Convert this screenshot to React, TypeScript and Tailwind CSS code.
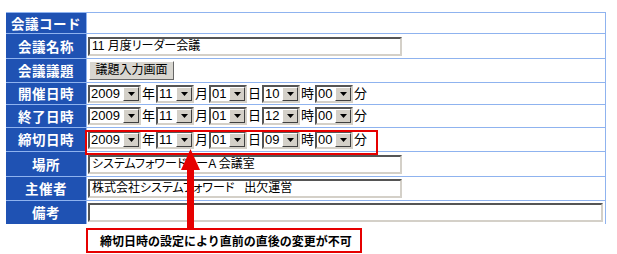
import React from "react";

const inset =
  "border-2 border-t-[#555] border-l-[#555] border-r-[#d4d0c8] border-b-[#d4d0c8] bg-white";

function Select({ value, wide }: { value: string; wide?: boolean }) {
  return (
    <div className={`${wide ? "w-[53px]" : "w-[38px]"} h-[18px] flex ${inset}`}>
      <span className="flex-1 pl-[1px] text-[13px] leading-[14px]">{value}</span>
      <span className="w-[16px] h-[14px] bg-[#d4d0c8] border border-t-white border-l-white border-r-[#404040] border-b-[#404040] flex items-center justify-center">
        <svg width="7" height="4" viewBox="0 0 7 4">
          <path d="M0 0h7L3.5 4z" fill="#000" />
        </svg>
      </span>
    </div>
  );
}

function Unit({ ch }: { ch: string }) {
  return <span className="w-[15px] text-center text-[13px] leading-[18px]">{ch}</span>;
}

function DateTime({ y, m, d, h, mi }: { y: string; m: string; d: string; h: string; mi: string }) {
  return (
    <div className="flex items-center pl-[1px]">
      <Select value={y} wide />
      <Unit ch="年" />
      <Select value={m} />
      <Unit ch="月" />
      <Select value={d} />
      <Unit ch="日" />
      <Select value={h} />
      <Unit ch="時" />
      <Select value={mi} />
      <Unit ch="分" />
    </div>
  );
}

function TextBox({ value, full }: { value?: string; full?: boolean }) {
  return (
    <div className={`ml-[1px] ${full ? "w-[515px]" : "w-[314px]"} h-[19px] ${inset} pl-[2px] text-[12px] leading-[15px] whitespace-pre overflow-hidden [font-feature-settings:'palt']`}>
      {value}
    </div>
  );
}

type Row = { label: string; h: string; last?: boolean; body: React.ReactNode };

const rows: Row[] = [
  { label: "会議コード", h: "h-[21px]", body: null },
  { label: "会議名称", h: "h-[25px]", body: <TextBox value="11 月度リーダー会議" /> },
  {
    label: "会議議題",
    h: "h-[24px]",
    body: (
      <button className="ml-[2px] w-[85px] h-[19px] bg-[#d8d6d0] border border-t-white border-l-white border-r-[#666] border-b-[#666] text-[12px] leading-[15px] text-black">
        議題入力画面
      </button>
    ),
  },
  { label: "開催日時", h: "h-[22px]", body: <DateTime y="2009" m="11" d="01" h="10" mi="00" /> },
  { label: "終了日時", h: "h-[23px]", body: <DateTime y="2009" m="11" d="01" h="12" mi="00" /> },
  { label: "締切日時", h: "h-[24px]", body: <DateTime y="2009" m="11" d="01" h="09" mi="00" /> },
  { label: "場所", h: "h-[25px]", body: <TextBox value="システムフォワード   ーA 会議室" /> },
  { label: "主催者", h: "h-[24px]", body: <TextBox value="株式会社システムフォワード   出欠運営" /> },
  { label: "備考", h: "h-[23px]", last: true, body: <TextBox full /> },
];

export default function App() {
  return (
    <div className="relative w-[617px] h-[254px] overflow-hidden bg-white pt-[12px] pl-[6px] text-black font-['Liberation_Sans','Noto_Sans_CJK_JP',sans-serif]">
      {/* form table */}
      <div className="w-[600px] border-t border-r border-[#8fb3ef]">
        {rows.map((r) => (
          <div key={r.label} className={`flex ${r.h} ${r.last ? "" : "border-b border-[#8fb3ef]"}`}>
            <div className="w-[80px] shrink-0 bg-[#1f52b3] flex items-center justify-center text-white text-[13.5px] font-bold tracking-[0.5px] font-['Noto_Sans_CJK_JP',sans-serif]">
              {r.label}
            </div>
            <div className="flex-1 border-l border-[#8fb3ef] flex items-center">{r.body}</div>
          </div>
        ))}
      </div>

      {/* callout */}
      <div className="mt-[4px] ml-[80px] w-[276px] h-[25px] border-2 border-[#e60000] bg-white flex items-center pl-[12px] text-[12px] font-bold font-['Noto_Sans_CJK_JP',sans-serif]">
        締切日時の設定により直前の直後の変更が不可
      </div>

      {/* highlight around 締切日時 */}
      <div className="absolute left-[85px] top-[130px] w-[293px] h-[25px] border-2 border-[#e60000]" />

      {/* arrow */}
      <svg className="absolute left-[180px] top-[149px]" width="21" height="81" viewBox="0 0 21 81">
        <path d="M10.5 0L20 21H1z" fill="#e60000" />
        <rect x="7" y="20" width="7" height="61" fill="#e60000" />
      </svg>
    </div>
  );
}
